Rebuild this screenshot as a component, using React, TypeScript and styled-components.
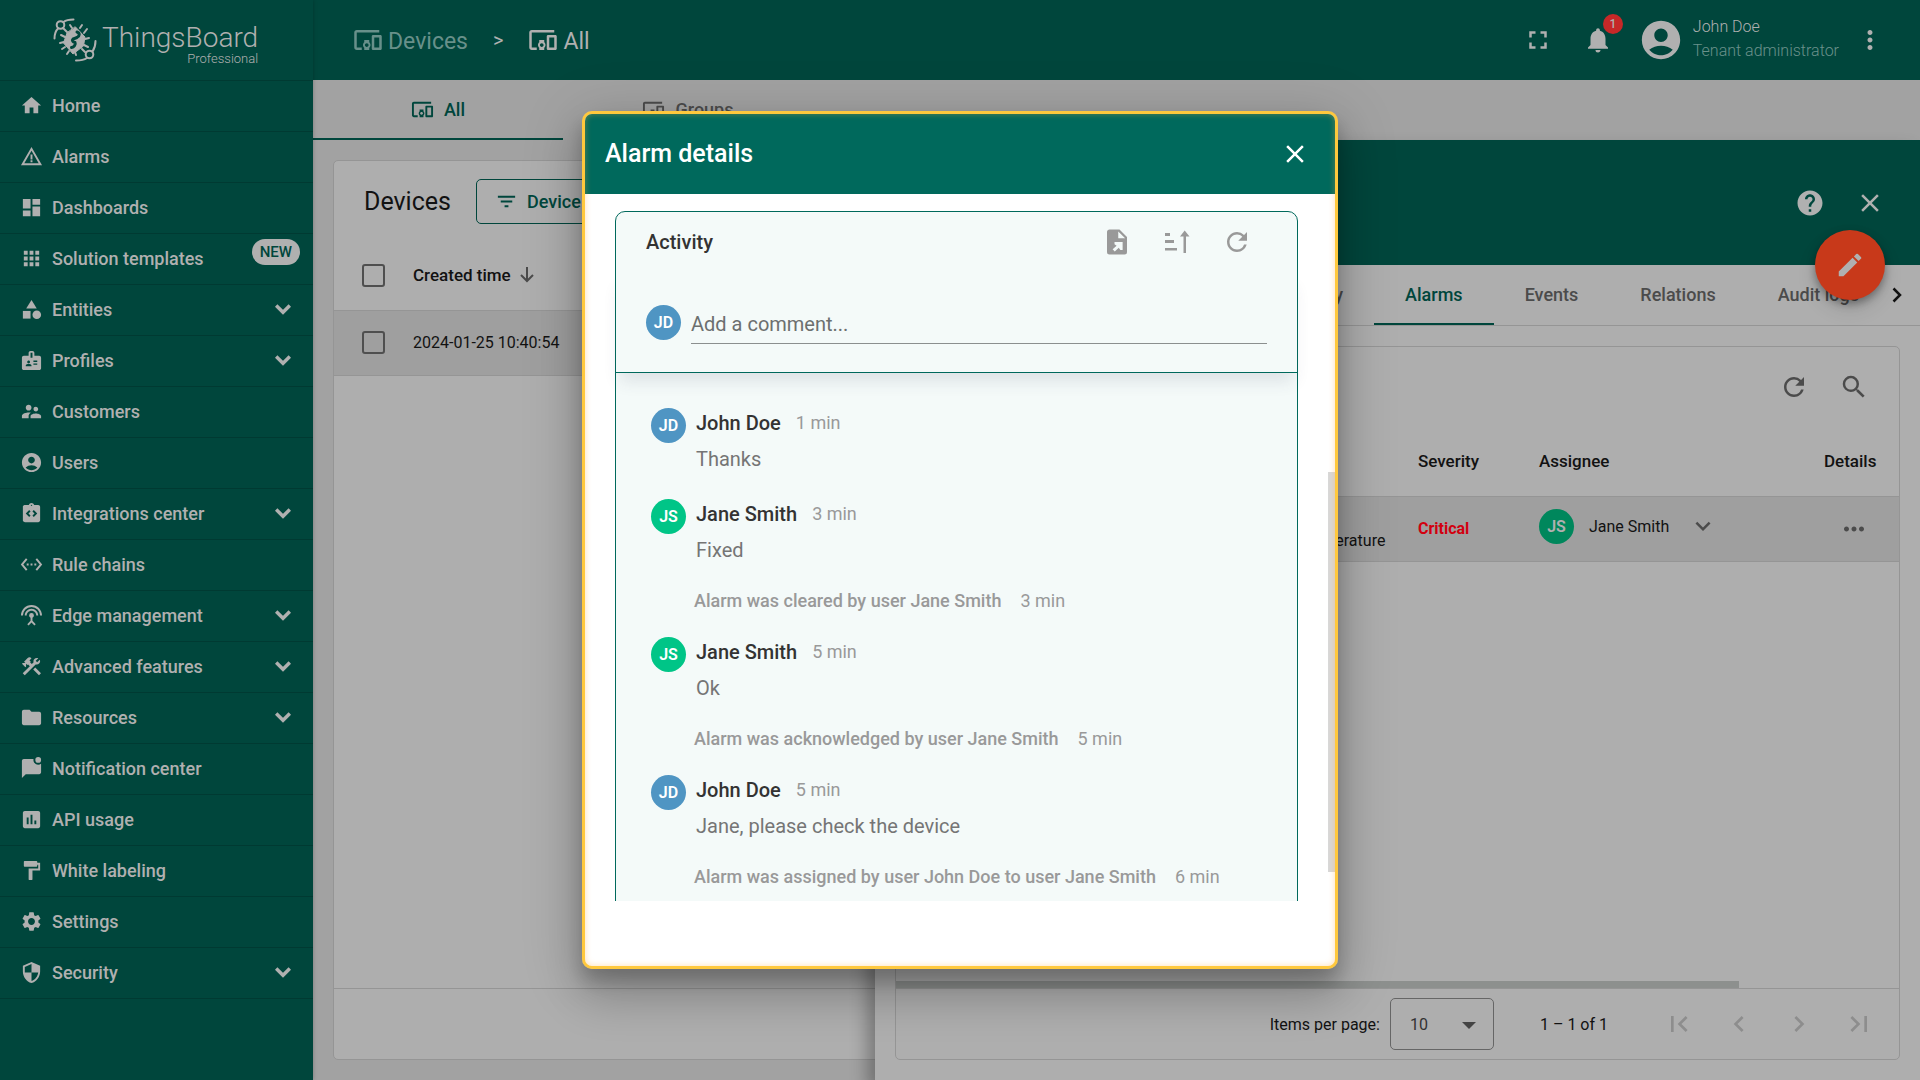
import React from "react";
import styled, { createGlobalStyle, css } from "styled-components";
import {
  MdAccountCircle, MdApps, MdBadge, MdCategory, MdChevronLeft, MdChevronRight, MdClose, MdConstruction,
  MdDashboard, MdDevicesOther, MdEdit, MdFilterList, MdFirstPage, MdFolder, MdFormatPaint, MdFullscreen,
  MdHelp, MdHome, MdInsertChart, MdIntegrationInstructions, MdKeyboardArrowDown, MdLastPage, MdMoreHoriz,
  MdMoreVert, MdNotifications, MdRefresh, MdSearch, MdSecurity, MdSettings, MdSettingsEthernet,
  MdSettingsInputAntenna, MdSupervisorAccount, MdWarningAmber,
} from "react-icons/md";

const c = {
  green: "#00463c",
  light: "#b0b0b0",
  surface: "#aeaeae",
  page: "#a2a2a2",
  row: "#9f9f9f",
  line: "#959595",
  ink: "#121212",
  muted: "#4b4b4b",
  primary: "#00695c",
};

const GlobalStyle = createGlobalStyle`
  *, *::before, *::after { box-sizing: border-box; }
  body { margin: 0; font-family: Roboto, "Liberation Sans", sans-serif; font-size: 16px; color: ${c.ink}; }
  button, input, select { font: inherit; color: inherit; letter-spacing: inherit; }
  h1, h2, h3, p, ul { margin: 0; padding: 0; font-weight: inherit; }
`;

const Shell = styled.div`
  display: flex;
  height: 100vh;
  overflow: hidden;
  background: ${c.page};
`;

/* ---------- sidebar ---------- */
const Sidebar = styled.aside`
  flex: 0 0 313px;
  background: ${c.green};
  color: ${c.light};
  z-index: 1;
  box-shadow: 0 0 4px rgba(0, 0, 0, 0.25);
`;
const Brand = styled.a`
  display: flex;
  align-items: center;
  gap: 5px;
  height: 80px;
  padding-left: 53px;
  color: inherit;
  text-decoration: none;
`;
const BrandText = styled.span`
  display: flex;
  flex-direction: column;
  align-items: flex-end;
  padding-top: 10px;
`;
const BrandName = styled.span`
  font-size: 28px;
  line-height: 28px;
  font-weight: 300;
`;
const BrandEdition = styled.span`
  font-size: 13px;
  line-height: 14px;
  font-weight: 300;
`;
const Menu = styled.ul`
  list-style: none;
`;
const MenuLink = styled.a`
  display: flex;
  align-items: center;
  gap: 9px;
  height: 51px;
  padding: 0 22px 1px 20px;
  border-top: 1px solid #003a32;
  color: inherit;
  text-decoration: none;
  font-size: 18px;
  font-weight: 500;
  li:last-child & { height: 52px; border-bottom: 1px solid #003a32; }
`;
const MenuLabel = styled.span`
  flex: 1;
`;
const NewBadge = styled.span`
  align-self: flex-start;
  margin: 5px -9px 0 0;
  padding: 0 8px;
  border-radius: 13px;
  background: ${c.light};
  color: ${c.green};
  font-size: 15px;
  line-height: 26px;
`;

const LogoMark = () => (
  <svg width="44" height="46" viewBox="0 0 44 46" fill="none" stroke="currentColor" strokeWidth="2" strokeLinecap="round">
    <circle cx="7.500" cy="8" r="3.800" />
    <path d="M10.500 5C13 3 16.500 2.400 20.500 2.400M5 11.500C2.500 14 1.500 17 1.500 21.500" />
    <circle cx="36.500" cy="37.500" r="3.800" />
    <path d="M34 41C31 43 28 43.500 23 43.500M39.500 34.500C41.500 31.500 42.500 29 42.500 24" />
    <path d="M14 15L10 11M19 11L17 8M27 11L29 8M31 16L34 12M32 22L36 21M31 28L35 30M29 32L32 35M22 35L23 38M16 34L14 37M12 30L9 32M11 25L7 26M12 20L8 18" />
    <path d="M22.500 10L32 20L30.500 29L20 37L10.500 26L14 16Z" fill="currentColor" strokeWidth="1" strokeLinejoin="round" />
    <path d="M24 15C27 16 27 19 24 20.500L20 22C18.500 23.500 20 25 22 25.500C23 27.500 21 30 18.500 30.500" stroke={c.green} strokeWidth="3" />
  </svg>
);
const UnreadChatIcon = () => (
  <svg width="23" height="23" viewBox="0 0 24 24" fill="currentColor">
    <path d="M22 7v9c0 1.100-.9 2-2 2H6l-4 4V4c0-1.100.9-2 2-2h10.100c-.06.320-.1.660-.1 1 0 2.760 2.240 5 5 5 1.130 0 2.160-.390 3-1z" />
    <circle cx="19" cy="3" r="3" />
  </svg>
);
const Chevron = () => (
  <svg width="16" height="11" viewBox="0 0 16 11" fill="none" stroke="currentColor" strokeWidth="3.400">
    <path d="M1.200 1.500L8 8.300L14.800 1.500" />
  </svg>
);
const ExportFileIcon = () => (
  <svg width="30" height="30" viewBox="0 0 24 24" fill="currentColor" fillRule="evenodd">
    <path d="M6 2h8l6 6v12a2 2 0 0 1-2 2H6a2 2 0 0 1-2-2V4c0-1.100.9-2 2-2zM13 3.500V9h5.500zM10 12v1.800l1.700 1.200L8.500 17.800l1.700 1.800 3.200-3 1.300 1.700H16.500V12z" />
  </svg>
);
const SortOrderIcon = () => (
  <svg width="30" height="30" viewBox="0 0 30 30" fill="currentColor">
    <path d="M3 6h5v3H3zM3 13h9v3H3zM3 21h12v2.500H3zM21.500 9h2.500v17h-2.500zM22.700 3.500L27.500 9.500H18z" />
  </svg>
);
const SortArrow = () => (
  <svg width="14" height="16" viewBox="0 0 14 16" fill="none" stroke={c.muted} strokeWidth="2">
    <path d="M7 0V14M1 8L7 14L13 8" />
  </svg>
);

type Item = { label: string; icon: React.ReactNode; expandable?: boolean; isNew?: boolean };
const menu: Item[] = [
  { label: "Home", icon: <MdHome size={23} /> },
  { label: "Alarms", icon: <MdWarningAmber size={23} /> },
  { label: "Dashboards", icon: <MdDashboard size={23} /> },
  { label: "Solution templates", icon: <MdApps size={23} />, isNew: true },
  { label: "Entities", icon: <MdCategory size={23} />, expandable: true },
  { label: "Profiles", icon: <MdBadge size={23} />, expandable: true },
  { label: "Customers", icon: <MdSupervisorAccount size={23} /> },
  { label: "Users", icon: <MdAccountCircle size={23} /> },
  { label: "Integrations center", icon: <MdIntegrationInstructions size={23} />, expandable: true },
  { label: "Rule chains", icon: <MdSettingsEthernet size={23} /> },
  { label: "Edge management", icon: <MdSettingsInputAntenna size={23} />, expandable: true },
  { label: "Advanced features", icon: <MdConstruction size={23} />, expandable: true },
  { label: "Resources", icon: <MdFolder size={23} />, expandable: true },
  { label: "Notification center", icon: <UnreadChatIcon /> },
  { label: "API usage", icon: <MdInsertChart size={23} /> },
  { label: "White labeling", icon: <MdFormatPaint size={23} /> },
  { label: "Settings", icon: <MdSettings size={23} /> },
  { label: "Security", icon: <MdSecurity size={23} />, expandable: true },
];

/* ---------- top bar ---------- */
const Main = styled.div`
  flex: 1;
  min-width: 0;
  display: flex;
  flex-direction: column;
`;
const TopBar = styled.header`
  flex: 0 0 80px;
  display: flex;
  align-items: center;
  justify-content: space-between;
  padding: 0 35px 0 40px;
  background: ${c.green};
  color: ${c.light};
`;
const Crumbs = styled.nav`
  display: flex;
  align-items: center;
  gap: 25px;
  font-size: 20px;
`;
const Crumb = styled.a<{ $dim?: boolean }>`
  display: flex;
  align-items: flex-end;
  gap: 5px;
  color: ${(p) => (p.$dim ? "#68908a" : c.light)};
  text-decoration: none;
  font-size: 23px;
  line-height: 26px;
`;
const IconButton = styled.button<{ $size?: number }>`
  position: relative;
  flex: none;
  display: inline-flex;
  align-items: center;
  justify-content: center;
  width: ${(p) => p.$size ?? 60}px;
  height: ${(p) => p.$size ?? 60}px;
  padding: 0;
  border: 0;
  background: none;
`;
const Actions = styled.div`
  display: flex;
  align-items: center;
`;
const CountBadge = styled.span`
  position: absolute;
  top: 4px;
  right: 5px;
  width: 20px;
  border-radius: 50%;
  background: #c62828;
  font-size: 12px;
  line-height: 20px;
  font-weight: 500;
`;
const User = styled.div`
  display: flex;
  align-items: center;
  gap: 9px;
  margin: 0 16px 0 10px;
`;
const UserInfo = styled.div`
  display: flex;
  flex-direction: column;
  padding-bottom: 2px;
  font-size: 16px;
  line-height: 24px;
  font-weight: 300;
`;
const UserRole = styled.span`
  color: #6a918b;
`;

/* ---------- tabs ---------- */
const Content = styled.main`
  position: relative;
  flex: 1;
  min-height: 0;
  display: flex;
  flex-direction: column;
`;
const PageTabs = styled.nav`
  flex: 0 0 60px;
  display: flex;
`;
const tabBase = css`
  display: flex;
  align-items: center;
  justify-content: center;
  text-decoration: none;
  font-size: 18px;
  font-weight: 500;
`;
const PageTab = styled.a<{ $active?: boolean }>`
  ${tabBase}
  width: 250px;
  gap: 10px;
  border-bottom: 2px solid ${(p) => (p.$active ? c.green : "transparent")};
  color: ${(p) => (p.$active ? c.green : c.muted)};
`;

/* ---------- devices card ---------- */
const Card = styled.section`
  flex: 1;
  display: flex;
  flex-direction: column;
  margin: 20px;
  border: 1px solid ${c.line};
  border-radius: 5px;
  background: ${c.surface};
`;
const CardHead = styled.div`
  display: flex;
  align-items: center;
  gap: 25px;
  height: 80px;
  padding-left: 30px;
`;
const CardTitle = styled.h1`
  font-size: 25px;
`;
const FilterButton = styled.button`
  display: flex;
  align-items: center;
  gap: 9px;
  height: 45px;
  padding: 0 18px;
  border: 1px solid ${c.green};
  border-radius: 5px;
  background: none;
  color: ${c.green};
  font-size: 18px;
  font-weight: 500;
`;
const DataTable = styled.table`
  width: 100%;
  border-collapse: collapse;
  table-layout: fixed;
  th, td { padding: 0; text-align: left; border-bottom: 1px solid ${c.line}; }
  th { font-size: 17px; font-weight: 500; }
  tbody tr { background: ${c.row}; height: 65px; }
`;
const DeviceTable = styled(DataTable)`
  thead tr { height: 69px; }
`;
const HeadLabel = styled.span`
  display: flex;
  align-items: center;
  gap: 9px;
`;
const Check = styled.input`
  display: block;
  appearance: none;
  width: 23px;
  height: 23px;
  margin: 0 0 0 28px;
  border: 2px solid #4f4f4f;
  border-radius: 3px;
`;
const CardFoot = styled.div`
  height: 71px;
  margin-top: auto;
  border-top: 1px solid ${c.line};
`;

/* ---------- device drawer ---------- */
const Drawer = styled.aside`
  position: absolute;
  top: 60px;
  right: 0;
  bottom: 0;
  width: 65%;
  display: flex;
  flex-direction: column;
  background: ${c.surface};
  box-shadow: -8px 10px 16px rgba(0, 0, 0, 0.3);
`;
const DrawerHead = styled.div`
  flex: 0 0 125px;
  display: flex;
  align-items: center;
  justify-content: flex-end;
  padding-right: 20px;
  background: ${c.green};
  color: ${c.light};
`;
const EditFab = styled.button`
  position: absolute;
  top: 90px;
  right: 35px;
  display: flex;
  align-items: center;
  justify-content: center;
  width: 70px;
  height: 70px;
  border: 0;
  border-radius: 50%;
  background: #c8391a;
  color: ${c.light};
  box-shadow: 0 4px 8px rgba(0, 0, 0, 0.35), 0 10px 20px rgba(0, 0, 0, 0.1);
`;
const DrawerTabs = styled.div`
  flex: 0 0 61px;
  display: flex;
  border-bottom: 1px solid ${c.line};
`;
const TabStrip = styled.nav`
  flex: 1;
  display: flex;
  justify-content: flex-end;
  min-width: 0;
  margin-right: -16px;
`;
const DrawerTab = styled.a<{ $active?: boolean }>`
  ${tabBase}
  flex: none;
  padding: 0 31px;
  border-bottom: 2px solid ${(p) => (p.$active ? c.green : "transparent")};
  color: ${(p) => (p.$active ? c.green : c.muted)};
`;
const TabPager = styled.button`
  width: 46px;
  padding: 0;
  border: 0;
  background: none;
  svg { display: block; margin: 0 auto; }
`;
const Panel = styled.section`
  flex: 1;
  display: flex;
  flex-direction: column;
  margin: 20px;
  border: 1px solid ${c.line};
  border-radius: 5px;
`;
const PanelTools = styled.div`
  display: flex;
  justify-content: flex-end;
  height: 79px;
  padding: 10px 15px;
  color: ${c.muted};
`;
const AlarmTable = styled(DataTable)`
  thead tr { height: 70px; }
`;
const Severity = styled.span`
  color: #d2000f;
  font-weight: 700;
`;
const Assignee = styled.div`
  display: flex;
  align-items: center;
  padding-bottom: 5px;
  span { margin-right: 15px; }
  svg { margin-left: 19px; color: ${c.muted}; }
`;
const Avatar = styled.span<{ $tone: string; $ink?: string }>`
  flex: none;
  width: 35px;
  margin-right: 10px;
  border-radius: 50%;
  background: ${(p) => p.$tone};
  color: ${(p) => p.$ink ?? "#fff"};
  font-size: 16px;
  line-height: 35px;
  font-weight: 600;
  text-align: center;
`;
const TypeCell = styled.td`
  line-height: 24px;
`;
const ScrollThumb = styled.div`
  width: 84%;
  height: 7px;
  margin-top: auto;
  background: #8d908e;
`;
const Pager = styled.div`
  display: flex;
  align-items: center;
  justify-content: flex-end;
  height: 71px;
  padding-right: 10px;
  border-top: 1px solid ${c.line};
`;
const PageSize = styled.label`
  display: flex;
  align-items: center;
  gap: 10px;
`;
const SelectBox = styled.span`
  position: relative;
  display: block;
  width: 104px;
  svg { position: absolute; right: 18px; top: 24px; pointer-events: none; }
`;
const Select = styled.select`
  appearance: none;
  width: 100%;
  height: 52px;
  padding: 0 19px;
  border: 1px solid #666;
  border-radius: 5px;
  background: transparent;
  color: #333;
`;
const Range = styled.span`
  margin: 0 41px 0 46px;
`;
const PageButton = styled(IconButton)`
  color: #8d8d8d;
`;

/* ---------- dialog ---------- */
const Overlay = styled.div`
  position: fixed;
  inset: 0;
  z-index: 2;
  display: flex;
  align-items: center;
  justify-content: center;
`;
const Dialog = styled.div`
  position: relative;
  display: flex;
  flex-direction: column;
  width: 756px;
  max-width: 90vw;
  height: calc(100vh - 222px);
  overflow: hidden;
  border: 3px solid #ffc83d;
  border-radius: 10px;
  background: #fff;
  &::after {
    content: "";
    position: absolute;
    inset: 0;
    border-radius: 7px;
    box-shadow: inset 0 0 6px rgba(255, 170, 60, 0.4);
    pointer-events: none;
  }
`;
const DialogShadow = styled.div`
  border-radius: 10px;
  box-shadow: 0 12px 18px rgba(0, 0, 0, 0.2), 0 26px 46px 4px rgba(0, 0, 0, 0.16), 0 10px 56px 10px rgba(0, 0, 0, 0.12);
`;
const DialogHead = styled.header`
  flex: 0 0 80px;
  display: flex;
  align-items: center;
  justify-content: space-between;
  padding: 0 10px 0 20px;
  background: ${c.primary};
  color: #fff;
`;
const DialogTitle = styled.h2`
  font-size: 25px;
  line-height: 30px;
  font-weight: 500;
  padding-bottom: 1px;
`;
const DialogBody = styled.div`
  flex: 1;
  min-height: 0;
  overflow: hidden;
  padding: 17px 37px 0 30px;
`;
const DialogFoot = styled.footer`
  flex: 0 0 65px;
`;
const DialogThumb = styled.div`
  position: absolute;
  right: 0;
  top: 42%;
  width: 7px;
  height: 47%;
  background: #d8d8d8;
`;
const Activity = styled.section`
  border: 1px solid ${c.primary};
  border-radius: 10px 10px 0 0;
  background: #f4faf9;
`;
const ActivityHead = styled.div`
  display: flex;
  align-items: center;
  justify-content: space-between;
  height: 60px;
  padding: 0 30px;
  color: #999;
`;
const ActivityTitle = styled.h3`
  color: #333;
  font-size: 20px;
  font-weight: 500;
`;
const CommentForm = styled.label`
  display: flex;
  align-items: center;
  height: 101px;
  padding: 0 30px;
  border-bottom: 1px solid ${c.primary};
  box-shadow: 0 12px 16px -4px rgba(60, 60, 90, 0.12);
`;
const CommentInput = styled.input`
  flex: 1;
  min-width: 0;
  height: 44px;
  padding: 4px 0 0;
  border: 0;
  border-bottom: 1px solid #8b8f8f;
  outline: 0;
  background: none;
  font-size: 20px;
  &::placeholder { color: #6c6f6f; opacity: 1; }
`;
const Feed = styled.ul`
  display: flex;
  flex-direction: column;
  gap: 25px;
  padding: 35px;
  list-style: none;
`;
const Comment = styled.li`
  display: flex;
  align-items: flex-start;
`;
const CommentBody = styled.div`
  display: grid;
  gap: 6px;
  font-size: 20px;
  line-height: 30px;
  color: #757575;
`;
const CommentHead = styled.div`
  display: flex;
  gap: 15px;
`;
const Author = styled.strong`
  color: #333;
  font-weight: 500;
`;
const Time = styled.time`
  color: #999;
  font-size: 18px;
  font-weight: 400;
`;
const SystemNote = styled.li`
  display: flex;
  gap: 19px;
  padding-left: 43px;
  color: #999;
  font-size: 18px;
  line-height: 22px;
  font-weight: 500;
`;

const BLUE = "#4f95c3";
const MINT = "#00c587";
const feed = [
  { name: "John Doe", time: "1 min", text: "Thanks" },
  { name: "Jane Smith", time: "3 min", text: "Fixed" },
  { note: "Alarm was cleared by user Jane Smith", time: "3 min" },
  { name: "Jane Smith", time: "5 min", text: "Ok" },
  { note: "Alarm was acknowledged by user Jane Smith", time: "5 min" },
  { name: "John Doe", time: "5 min", text: "Jane, please check the device" },
  { note: "Alarm was assigned by user John Doe to user Jane Smith", time: "6 min" },
];

const AlarmDialog = () => (
  <Overlay>
    <DialogShadow>
      <Dialog role="dialog" aria-label="Alarm details">
        <DialogHead>
          <DialogTitle>Alarm details</DialogTitle>
          <IconButton aria-label="Close"><MdClose size={30} /></IconButton>
        </DialogHead>
        <DialogBody>
          <Activity>
            <ActivityHead>
              <ActivityTitle>Activity</ActivityTitle>
              <Actions>
                <IconButton aria-label="Export"><ExportFileIcon /></IconButton>
                <IconButton aria-label="Sort order"><SortOrderIcon /></IconButton>
                <IconButton aria-label="Refresh"><MdRefresh size={30} /></IconButton>
              </Actions>
            </ActivityHead>
            <CommentForm>
              <Avatar $tone={BLUE}>JD</Avatar>
              <CommentInput placeholder="Add a comment..." aria-label="Add a comment" />
            </CommentForm>
            <Feed>
              {feed.map((f, i) =>
                f.name ? (
                  <Comment key={i}>
                    <Avatar $tone={f.name === "John Doe" ? BLUE : MINT}>{f.name === "John Doe" ? "JD" : "JS"}</Avatar>
                    <CommentBody>
                      <CommentHead><Author>{f.name}</Author><Time>{f.time}</Time></CommentHead>
                      <p>{f.text}</p>
                    </CommentBody>
                  </Comment>
                ) : (
                  <SystemNote key={i}><span>{f.note}</span><Time>{f.time}</Time></SystemNote>
                )
              )}
            </Feed>
          </Activity>
        </DialogBody>
        <DialogFoot />
        <DialogThumb />
      </Dialog>
    </DialogShadow>
  </Overlay>
);

const DeviceDrawer = () => (
  <Drawer>
    <DrawerHead>
      <IconButton aria-label="Help"><MdHelp size={30} /></IconButton>
      <IconButton aria-label="Close"><MdClose size={30} /></IconButton>
    </DrawerHead>
    <DrawerTabs>
      <TabStrip>
        <DrawerTab href="#telemetry">Latest telemetry</DrawerTab>
        <DrawerTab href="#alarms" $active>Alarms</DrawerTab>
        <DrawerTab href="#events">Events</DrawerTab>
        <DrawerTab href="#relations">Relations</DrawerTab>
        <DrawerTab href="#audit">Audit logs</DrawerTab>
      </TabStrip>
      <TabPager aria-label="More tabs">
        <svg width="10" height="16" viewBox="0 0 10 16" fill="none" stroke="#111" strokeWidth="2.500"><path d="M1.500 1.500L8 8L1.500 14.500" /></svg>
      </TabPager>
    </DrawerTabs>
    <Panel>
      <PanelTools>
        <IconButton aria-label="Refresh"><MdRefresh size={30} /></IconButton>
        <IconButton aria-label="Search"><MdSearch size={30} /></IconButton>
      </PanelTools>
      <AlarmTable>
        <colgroup>
          <col />
          <col width="123" />
          <col width="121" />
          <col width="285" />
          <col width="75" />
        </colgroup>
        <thead>
          <tr><th /><th /><th>Severity</th><th>Assignee</th><th>Details</th></tr>
        </thead>
        <tbody>
          <tr>
            <td />
            <TypeCell>High<br />Temperature</TypeCell>
            <td><Severity>Critical</Severity></td>
            <td>
              <Assignee><Avatar $tone="#00875c" $ink={c.light}>JS</Avatar>Jane Smith<MdKeyboardArrowDown size={30} /></Assignee>
            </td>
            <td><IconButton aria-label="Details"><MdMoreHoriz size={30} color={c.muted} /></IconButton></td>
          </tr>
        </tbody>
      </AlarmTable>
      <ScrollThumb />
      <Pager>
        <PageSize>
          Items per page:
          <SelectBox>
            <Select defaultValue="10"><option>10</option><option>20</option></Select>
            <svg width="14" height="7" viewBox="0 0 14 7" fill="#444"><path d="M0 0H14L7 7Z" /></svg>
          </SelectBox>
        </PageSize>
        <Range>1 – 1 of 1</Range>
        <PageButton aria-label="First page"><MdFirstPage size={32} /></PageButton>
        <PageButton aria-label="Previous page"><MdChevronLeft size={32} /></PageButton>
        <PageButton aria-label="Next page"><MdChevronRight size={32} /></PageButton>
        <PageButton aria-label="Last page"><MdLastPage size={32} /></PageButton>
      </Pager>
    </Panel>
    <EditFab aria-label="Edit"><MdEdit size={30} /></EditFab>
  </Drawer>
);

export default function App() {
  return (
    <>
      <GlobalStyle />
      <Shell>
        <Sidebar>
          <Brand href="#home">
            <LogoMark />
            <BrandText>
              <BrandName>ThingsBoard</BrandName>
              <BrandEdition>Professional</BrandEdition>
            </BrandText>
          </Brand>
          <Menu>
            {menu.map((m) => (
              <li key={m.label}>
                <MenuLink href="#">
                  {m.icon}
                  <MenuLabel>{m.label}</MenuLabel>
                  {m.isNew && <NewBadge>NEW</NewBadge>}
                  {m.expandable && <Chevron />}
                </MenuLink>
              </li>
            ))}
          </Menu>
        </Sidebar>
        <Main>
          <TopBar>
            <Crumbs>
              <Crumb href="#devices" $dim><MdDevicesOther size={30} />Devices</Crumb>
              <span>&gt;</span>
              <Crumb href="#all"><MdDevicesOther size={30} />All</Crumb>
            </Crumbs>
            <Actions>
              <IconButton aria-label="Fullscreen"><MdFullscreen size={30} /></IconButton>
              <IconButton aria-label="Notifications"><MdNotifications size={30} /><CountBadge>1</CountBadge></IconButton>
              <User>
                <IconButton $size={46} aria-label="Account"><MdAccountCircle size={46} /></IconButton>
                <UserInfo><span>John Doe</span><UserRole>Tenant administrator</UserRole></UserInfo>
              </User>
              <IconButton $size={30} aria-label="More"><MdMoreVert size={30} /></IconButton>
            </Actions>
          </TopBar>
          <Content>
            <PageTabs>
              <PageTab href="#all" $active><MdDevicesOther size={23} />All</PageTab>
              <PageTab href="#groups"><MdDevicesOther size={23} />Groups</PageTab>
            </PageTabs>
            <Card>
              <CardHead>
                <CardTitle>Devices</CardTitle>
                <FilterButton><MdFilterList size={23} />Device Filter</FilterButton>
              </CardHead>
              <DeviceTable>
                <colgroup><col width="79" /><col /></colgroup>
                <thead>
                  <tr>
                    <th><Check type="checkbox" aria-label="Select all" /></th>
                    <th><HeadLabel>Created time<SortArrow /></HeadLabel></th>
                  </tr>
                </thead>
                <tbody>
                  <tr>
                    <td><Check type="checkbox" aria-label="Select row" /></td>
                    <td>2024-01-25 10:40:54</td>
                  </tr>
                </tbody>
              </DeviceTable>
              <CardFoot />
            </Card>
            <DeviceDrawer />
          </Content>
        </Main>
      </Shell>
      <AlarmDialog />
    </>
  );
}
